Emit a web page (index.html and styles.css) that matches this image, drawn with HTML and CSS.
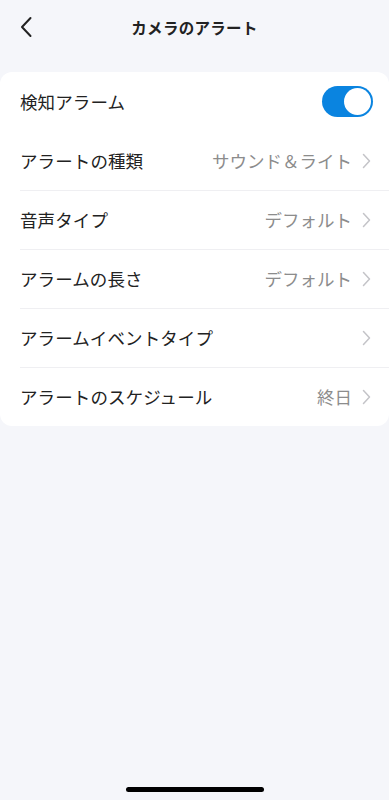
FILE: index.html
```html
<!DOCTYPE html>
<html lang="ja">
<head>
<meta charset="utf-8">
<link rel="stylesheet" href="styles.css">
</head>
<body>
<div class="screen">
  <header class="nav">
    <svg class="back" width="14" height="22" viewBox="0 0 14 22"><path d="M11.5 2 L3 11 L11.5 20" fill="none" stroke="#222" stroke-width="2" stroke-linecap="round" stroke-linejoin="round"/></svg>
    <div class="title">カメラのアラート</div>
  </header>
  <section class="card">
    <div class="row first">
      <span class="label">検知アラーム</span>
      <span class="toggle"><span class="knob"></span></span>
    </div>
    <div class="row">
      <span class="label">アラートの種類</span>
      <span class="value">サウンド＆ライト</span>
      <svg class="chev" width="9" height="16" viewBox="0 0 9 16"><path d="M1.5 1.5 L7.5 8 L1.5 14.5" fill="none" stroke="#c4c4c8" stroke-width="1.5" stroke-linecap="round" stroke-linejoin="round"/></svg>
    </div>
    <div class="row">
      <span class="label">音声タイプ</span>
      <span class="value">デフォルト</span>
      <svg class="chev" width="9" height="16" viewBox="0 0 9 16"><path d="M1.5 1.5 L7.5 8 L1.5 14.5" fill="none" stroke="#c4c4c8" stroke-width="1.5" stroke-linecap="round" stroke-linejoin="round"/></svg>
    </div>
    <div class="row">
      <span class="label">アラームの長さ</span>
      <span class="value">デフォルト</span>
      <svg class="chev" width="9" height="16" viewBox="0 0 9 16"><path d="M1.5 1.5 L7.5 8 L1.5 14.5" fill="none" stroke="#c4c4c8" stroke-width="1.5" stroke-linecap="round" stroke-linejoin="round"/></svg>
    </div>
    <div class="row">
      <span class="label">アラームイベントタイプ</span>
      <span class="value"></span>
      <svg class="chev" width="9" height="16" viewBox="0 0 9 16"><path d="M1.5 1.5 L7.5 8 L1.5 14.5" fill="none" stroke="#c4c4c8" stroke-width="1.5" stroke-linecap="round" stroke-linejoin="round"/></svg>
    </div>
    <div class="row">
      <span class="label">アラートのスケジュール</span>
      <span class="value">終日</span>
      <svg class="chev" width="9" height="16" viewBox="0 0 9 16"><path d="M1.5 1.5 L7.5 8 L1.5 14.5" fill="none" stroke="#c4c4c8" stroke-width="1.5" stroke-linecap="round" stroke-linejoin="round"/></svg>
    </div>
  </section>
  <div class="spacer"></div>
  <div class="home-bar"></div>
</div>
</body>
</html>
```
FILE: styles.css
```css
* { box-sizing: border-box; }
html, body { margin: 0; padding: 0; }
body {
  background: #f5f6fa;
  font-family: "Noto Sans CJK JP", "Noto Sans", sans-serif;
  color: #222;
}
.screen {
  width: 389px;
  height: 800px;
  display: flex;
  flex-direction: column;
}
.nav {
  height: 54px;
  display: flex;
  align-items: center;
  justify-content: center;
  position: relative;
}
.back {
  position: absolute;
  left: 19px;
  top: 16px;
}
.title {
  font-size: 15.5px;
  font-weight: 700;
  color: #222;
  letter-spacing: 0.3px;
}
.card {
  margin-top: 18px;
  background: #fff;
  border-radius: 12px;
  display: flex;
  flex-direction: column;
}
.row {
  height: 59px;
  display: flex;
  align-items: center;
  padding: 0 18px 0 20px;
  position: relative;
}
.row + .row:not(:nth-child(2))::before {
  content: "";
  position: absolute;
  left: 20px;
  right: 0;
  top: 0;
  height: 1px;
  background: #efeff2;
}
.label {
  font-size: 17.5px;
  color: #222;
  flex: 1;
  letter-spacing: 0.1px;
}
.value {
  font-size: 17.5px;
  color: #8c8c8c;
  margin-right: 10px;
}
.chev { flex: none; }
.toggle {
  width: 51px;
  height: 31px;
  border-radius: 16px;
  background: #0a84e0;
  position: relative;
  margin-right: -2px;
}
.knob {
  position: absolute;
  right: 2px;
  top: 2px;
  width: 27px;
  height: 27px;
  border-radius: 50%;
  background: #fff;
}
.spacer { flex: 1; }
.home-bar {
  width: 138px;
  height: 5px;
  border-radius: 3px;
  background: #000;
  align-self: center;
  margin-bottom: 8px;
}
```
